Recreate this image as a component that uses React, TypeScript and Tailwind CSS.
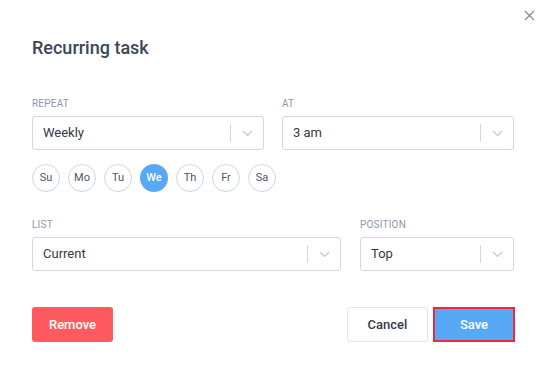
import React from "react";

function Chevron() {
  return (
    <svg width="11" height="7" viewBox="0 0 11 7" fill="none">
      <path d="M1 1l4.5 4.5L10 1" stroke="#c4c8cf" strokeWidth="1.2" />
    </svg>
  );
}

function Select({ value, width }: { value: string; width: string }) {
  return (
    <div
      className={`${width} h-[34px] flex items-center border border-[#d3d6db] rounded-[3px] bg-white`}
    >
      <span className="flex-1 pl-[10px] text-[13px] text-[#333a44]">{value}</span>
      <div className="w-px h-[18px] bg-[#d3d6db]" />
      <div className="w-[32px] flex justify-center">
        <Chevron />
      </div>
    </div>
  );
}

function Label({ children }: { children: React.ReactNode }) {
  return (
    <div className="text-[10px] leading-[12px] text-[#8a99ad] tracking-[0.2px] mb-[6px]">
      {children}
    </div>
  );
}

export default function App() {
  const days = ["Su", "Mo", "Tu", "We", "Th", "Fr", "Sa"];

  return (
    <div
      className="relative w-[545px] h-[366px] bg-white pl-[32px] pr-[30px] pt-[36px]"
      style={{ fontFamily: "Roboto, 'Liberation Sans', sans-serif" }}
    >
      {/* close */}
      <button className="absolute left-[524px] top-[10px] w-[11px] h-[11px]">
        <svg width="11" height="11" viewBox="0 0 11 11" fill="none">
          <path d="M1 1l9 9M10 1l-9 9" stroke="#8c8c8c" strokeWidth="1.3" />
        </svg>
      </button>

      <h1 className="text-[18px] leading-[24px] font-medium text-[#3b4656]">Recurring task</h1>

      <div className="mt-[38px] flex gap-[18px]">
        <div>
          <Label>REPEAT</Label>
          <Select value="Weekly" width="w-[232px]" />
        </div>
        <div>
          <Label>AT</Label>
          <Select value="3 am" width="w-[232px]" />
        </div>
      </div>

      <div className="mt-[14px] flex gap-[8px]">
        {days.map((d) =>
          d === "We" ? (
            <div
              key={d}
              className="w-[28px] h-[28px] rounded-full bg-[#58a9f5] flex items-center justify-center text-[11px] font-medium text-white"
            >
              {d}
            </div>
          ) : (
            <div
              key={d}
              className="w-[28px] h-[28px] rounded-full border border-[#cdd6e4] flex items-center justify-center text-[11px] text-[#4b5565]"
            >
              {d}
            </div>
          )
        )}
      </div>

      <div className="mt-[27px] flex gap-[19px]">
        <div>
          <Label>LIST</Label>
          <Select value="Current" width="w-[309px]" />
        </div>
        <div>
          <Label>POSITION</Label>
          <Select value="Top" width="w-[154px]" />
        </div>
      </div>

      <div className="mt-[36px] flex items-center">
        <button className="w-[81px] h-[35px] rounded-[3px] bg-[#ff5a5f] text-white text-[13px] font-medium">
          Remove
        </button>
        <div className="flex-1" />
        <button className="w-[81px] h-[35px] rounded-[3px] border border-[#e3e6ea] bg-white text-[#333c48] text-[13px] font-medium">
          Cancel
        </button>
        <button className="ml-[5px] w-[82px] h-[35px] border-2 border-[#f0283c] bg-[#58a9f5] text-white text-[13px] font-medium">
          Save
        </button>
      </div>
    </div>
  );
}
